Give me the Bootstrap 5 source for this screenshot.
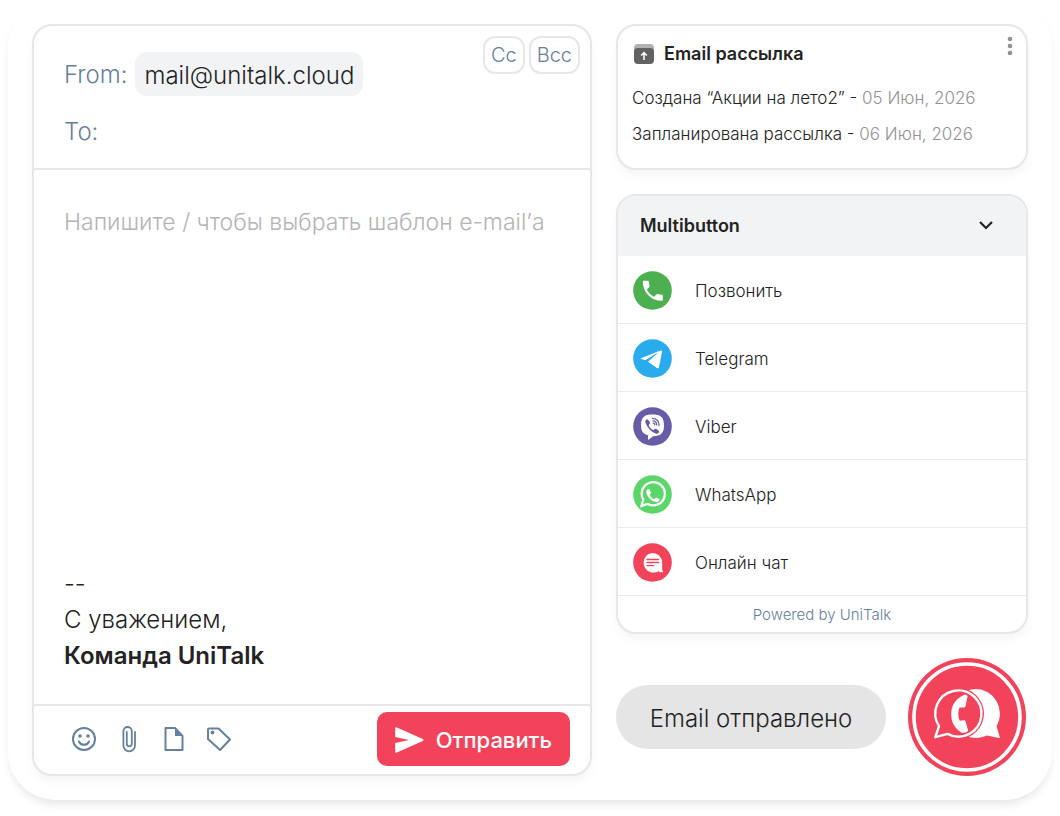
<!DOCTYPE html>
<html lang="ru">
<head>
<meta charset="utf-8">
<meta name="viewport" content="width=device-width, initial-scale=1">
<title>UniTalk Email</title>
<link href="https://cdn.jsdelivr.net/npm/bootstrap@5.3.0/dist/css/bootstrap.min.css" rel="stylesheet">
<style>
  :root { --line: #e6e6eb; --steel: #66819d; --ink: #232323; --brand: #f2435a; --soft: #f2f3f5; }
  body { font-family: Inter, "Liberation Sans", sans-serif; font-weight: 300; color: var(--ink); background: #fff; }
  .stage { border-radius: 48px; background: #fff; box-shadow: 0 6px 10px -2px rgba(0,0,0,.1); margin: 0 8px 16px; padding: 24px; }
  .layout { display: grid; grid-template-columns: 560fr 412fr; gap: 24px; }
  .panel { border: 2px solid var(--line); border-radius: 20px; background: #fff; box-shadow: 0 6px 12px -2px rgba(0,0,0,.05); overflow: hidden; }
  .t-lg { font-size: 24px; line-height: 36px; }
  .t-md { font-size: 17px; line-height: 36px; }
  .steel { color: var(--steel); }
  .composer-head { padding: 26px 30px 18px; border-bottom: 2px solid var(--line); }
  .composer-head .steel { padding-top: 2px; }
  .chip { background: var(--soft); border-radius: 12px; padding: 6px 9px 2px; }
  .copy-btns { top: 10px; right: 10px; gap: 4px; }
  .copy-btn { border: 2px solid var(--line); border-radius: 12px; background: #fff; color: var(--steel); font-size: 20px; line-height: 34px; font-weight: 300; padding: 0 6px; }
  .bare { border: 0; background: transparent; outline: 0; padding: 0; resize: none; color: inherit; font-weight: 300; }
  .composer-body { padding: 34px 30px 30px; }
  .composer-body textarea { font-size: 23px; line-height: 36px; }
  .composer-body textarea::placeholder { color: #b4b4b4; opacity: 1; }
  .composer-foot { padding: 6px 20px 8px 37px; border-top: 2px solid var(--line); }
  .tool { border: 0; background: none; padding: 0; color: var(--steel); width: 26px; height: 28px; line-height: 0; }
  .send { background: var(--brand); color: #fff; border: 0; border-radius: 10px; height: 54px; padding: 2px 18px 0; font-size: 22px; font-weight: 500; gap: 12px; }
  .news { padding: 10px 14px 16px; }
  .news-title { font-size: 18px; line-height: 36px; font-weight: 600; }
  .muted-date { color: #929292; }
  .kebab { top: 10px; right: 6px; border: 0; background: none; padding: 0; width: 20px; height: 20px; line-height: 0; }
  .multi-head { background: var(--soft); border: 0; height: 60px; padding: 0 32px 2px 22px; font-size: 18px; font-weight: 600; color: var(--ink); }
  .channel { height: 68px; padding: 2px 15px 0; gap: 23px; color: var(--ink); text-decoration: none; border-bottom: 1px solid #e9eaec; font-size: 17px; }
  .channel span { padding-top: 2px; }
  .powered { font-size: 15px; line-height: 34px; padding-top: 2px; text-decoration: none; color: var(--steel); }
  .toast-pill { background: #e5e5e5; border-radius: 32px; height: 64px; font-size: 24px; padding-top: 4px; }
  .fab { border: 0; background: none; padding: 0; width: 118px; height: 118px; line-height: 0; margin-right: 2px; }
</style>
</head>
<body>
<main class="stage">
  <div class="layout">
    <form class="panel d-flex flex-column position-relative" onsubmit="return false">
      <div class="composer-head t-lg">
        <div class="d-flex align-items-center gap-2">
          <span class="steel">From:</span>
          <output class="chip">mail@unitalk.cloud</output>
        </div>
        <div class="d-flex align-items-center mt-3 gap-2">
          <label class="steel" for="to">To:</label>
          <input class="bare flex-grow-1" id="to" type="email">
        </div>
        <div class="copy-btns d-flex position-absolute">
          <button type="button" class="copy-btn">Cc</button>
          <button type="button" class="copy-btn">Bcc</button>
        </div>
      </div>
      <div class="composer-body d-flex flex-column flex-grow-1">
        <textarea class="bare w-100 flex-grow-1" aria-label="Текст письма" placeholder="Напишите / чтобы выбрать шаблон e-mail’а"></textarea>
        <div class="t-lg">--<br>С уважением,<br><strong class="fw-semibold">Команда UniTalk</strong></div>
      </div>
      <div class="composer-foot d-flex align-items-center justify-content-between">
        <div class="d-flex align-items-center" style="gap:19px">
          <button type="button" class="tool" aria-label="Смайлы"><svg width="26" height="28" viewBox="0 0 26 28" fill="none" stroke="currentColor" stroke-width="2"><circle cx="13" cy="14" r="11"/><path d="M8 16.5a5.4 5.4 0 0 0 10 0" stroke-linecap="round"/><circle cx="9" cy="11" r="1.8" fill="currentColor" stroke="none"/><circle cx="17" cy="11" r="1.8" fill="currentColor" stroke="none"/></svg></button>
          <button type="button" class="tool" aria-label="Вложение"><svg width="26" height="28" viewBox="0 0 26 28" fill="none" stroke="currentColor" stroke-width="1.8" stroke-linecap="round"><path d="M19 7v13.5a5.8 5.8 0 0 1-11.6 0V6.200a4.200 4.200 0 0 1 8.400 0v12.600a2.500 2.500 0 0 1-5 0V7"/></svg></button>
          <button type="button" class="tool" aria-label="Файл"><svg width="26" height="28" viewBox="0 0 26 28"><path d="M4.500 3H14l7.500 8v14h-17z" fill="none" stroke="currentColor" stroke-width="2" stroke-linejoin="round"/><path d="M14 2.500V11h8z" fill="currentColor"/></svg></button>
          <button type="button" class="tool" aria-label="Метка"><svg width="26" height="28" viewBox="0 0 26 28"><path d="M3 3.500h9.500L24 14.500 14 25 2 14V4.500a1 1 0 0 1 1-1z" fill="none" stroke="currentColor" stroke-width="2" stroke-linejoin="round"/><circle cx="6.500" cy="7.500" r="1.900" fill="currentColor"/></svg></button>
        </div>
        <button type="submit" class="send d-flex align-items-center"><svg width="29" height="26" viewBox="0 0 29 26" fill="#fff"><path d="M1.300.3 27.800 12c1 .5 1 1.500 0 2L1.300 25.700C.6 26 .2 25.600.2 25v-9L14 13 .2 10V1C.2.400.6 0 1.300.3z"/></svg>Отправить</button>
      </div>
    </form>

    <div class="d-flex flex-column gap-4">
      <section class="panel news position-relative">
        <div class="news-title d-flex align-items-center gap-2 mb-2"><svg width="24" height="20" viewBox="-2 0 24 20"><rect width="20" height="16" rx="4" fill="#b2b2b2"/><rect y="4" width="20" height="16" rx="4" fill="#626262"/><path d="M10 16V9M7.200 11.500 10 8.700l2.800 2.800" fill="none" stroke="#fff" stroke-width="1.600"/></svg><span>Email рассылка</span></div>
        <div class="t-md">Создана “Акции на лето2” - <span class="muted-date">05 Июн, 2026</span></div>
        <div class="t-md">Запланирована рассылка - <span class="muted-date">06 Июн, 2026</span></div>
        <button type="button" class="kebab position-absolute" aria-label="Меню"><svg width="20" height="20" viewBox="0 0 20 20" fill="#929292"><circle cx="10" cy="3" r="2.300"/><circle cx="10" cy="10" r="2.300"/><circle cx="10" cy="17" r="2.300"/></svg></button>
      </section>

      <section class="panel">
        <button type="button" class="multi-head w-100 d-flex align-items-center justify-content-between">Multibutton<svg width="16" height="10" viewBox="0 0 16 10" fill="none" stroke="#232323" stroke-width="2.200"><path d="m2 2 6 6 6-6"/></svg></button>
        <nav>
          <a href="#" class="channel d-flex align-items-center"><svg width="39" height="39" viewBox="0 0 39 39"><circle cx="19.500" cy="19.500" r="19.300" fill="#4caf50"/><path transform="translate(6.500 6.500) scale(1.110)" fill="#fff" d="M6.620 10.790c1.440 2.830 3.760 5.140 6.590 6.590l2.200-2.200c.27-.27.670-.36 1.020-.24 1.120.37 2.330.57 3.570.57.55 0 1 .45 1 1V20c0 .55-.45 1-1 1C10.610 21 3 13.390 3 4c0-.55.45-1 1-1h3.500c.55 0 1 .45 1 1 0 1.250.2 2.450.57 3.570.11.35.03.74-.25 1.020z"/></svg><span>Позвонить</span></a>
          <a href="#" class="channel d-flex align-items-center"><svg width="39" height="39" viewBox="0 0 39 39"><circle cx="19.500" cy="19.500" r="19.300" fill="#2aabee"/><path fill="#fff" d="M8.500 19 27.500 11.600c1-.4 1.700.2 1.500 1.300l-3 15.100c-.2 1.300-1.100 1.600-2.100.9L15 22.700l9.200-8.300c.4-.4 0-.6-.6-.2l-11.300 7.100-4-1.200c-.7-.2-.6-.8.2-1.100z"/></svg><span>Telegram</span></a>
          <a href="#" class="channel d-flex align-items-center"><svg width="39" height="39" viewBox="0 0 39 39"><circle cx="19.500" cy="19.500" r="19.300" fill="#665ca7"/><path fill="#fff" d="M19.500 7.500c7.500 0 11.500 2 11.500 11 0 8-3.500 10.600-10.700 10.700L15 33v-4.700C10.500 27 8 24.500 8 18.500c0-9 4-11 11.500-11z"/><path fill="#665ca7" d="M13.200 12.800c.9-.8 1.700-.5 2.300.4l1.300 2c.5.8.2 1.500-.5 2-.6.500-.6 1-.2 1.900.7 1.800 1.800 3 3.500 3.700.8.400 1.300.1 1.800-.5.600-.7 1.200-.8 2-.3l2 1.400c.8.600.9 1.200.3 2.100-.9 1.300-1.900 1.700-3.300 1.100-5-2.300-8.200-5.800-10-11-.3-1.100 0-2 .8-2.800z"/><path fill="none" stroke="#665ca7" stroke-width="1.300" stroke-linecap="round" d="M19.500 11.300c4.200.2 6.600 3 6.500 7.300M20 13.900c2.400.2 3.600 1.700 3.600 4M20.300 16.200c.9.100 1.300.5 1.400 1.500"/></svg><span>Viber</span></a>
          <a href="#" class="channel d-flex align-items-center"><svg width="39" height="39" viewBox="0 0 39 39"><circle cx="19.500" cy="19.500" r="19.300" fill="#5bd769"/><path fill="none" stroke="#fff" stroke-width="2.300" d="m8.600 30.800 1.700-6.100A11.600 11.600 0 1 1 14.800 29z"/><path transform="translate(12 12.200) scale(.7)" fill="#fff" d="M6.620 10.790c1.440 2.830 3.760 5.140 6.590 6.590l2.200-2.200c.27-.27.670-.36 1.020-.24l3.600 1.600c1.200.5.900 1.500.4 2.600-.6 1.400-2.700 2.400-4.400 2.100C9 20.200 3.500 14.500 2 8c-.4-2 .5-3.900 2-5 .8-.5 2.300-.5 2.700.4l1.700 4c.3.600 0 1.200-.3 1.600z"/></svg><span>WhatsApp</span></a>
          <a href="#" class="channel d-flex align-items-center"><svg width="39" height="39" viewBox="0 0 39 39"><circle cx="19.500" cy="19.500" r="19.300" fill="#f2435a"/><path fill="#fff" d="M19.500 10a9.700 9.700 0 0 1 9.700 9.700v7.100l1 2.500c-2 .2-3.500 0-4.800-1.100A9.800 9.800 0 1 1 19.500 10z"/><path stroke="#f2435a" stroke-width="1.300" stroke-linecap="round" d="M14 16.500h11.500M14 19.500h11.500M14 22.700h6.500"/></svg><span>Онлайн чат</span></a>
        </nav>
        <a href="#" class="powered d-block text-center">Powered by UniTalk</a>
      </section>

      <div class="d-flex align-items-center" style="gap:22px">
        <div class="toast-pill flex-grow-1 d-flex align-items-center justify-content-center" role="status">Email отправлено</div>
        <button type="button" class="fab" aria-label="Открыть чат"><svg width="118" height="118" viewBox="0 0 118 118"><circle cx="59" cy="59" r="59" fill="#f2435a"/><circle cx="59" cy="59" r="53" fill="none" stroke="#fff" stroke-width="3.600"/><path fill="#fff" d="M67.500 31A24.500 24.500 0 0 1 88.500 68l3.300 11.200c0 .7-.3 1-1 .9L79 77.500A24.500 24.500 0 1 1 67.500 31z"/><circle cx="50.400" cy="55.500" r="25.600" fill="#f2435a"/><path fill="#f2435a" stroke="#fff" stroke-width="2.400" stroke-linejoin="round" d="M39.500 75.900 27.300 79.200 31 68.100A23.100 23.100 0 1 1 39.500 75.900z"/><path fill="#fff" d="M57 36.500c1.500.2 2.700 1 2.500 2.200l-2 9.500c-.2.900-.8 1.200-1.700 1.200h-4.300c-1.700 4.500-1.700 9 .2 13.300l4.200-.5c.9-.1 1.400.3 1.600 1.100l2.500 8.700c.3 1.100-.5 1.800-1.500 2.200l-4 .8C46 70.500 43 63.500 43.200 55.500c0-8 5-15.800 13.800-19z"/></svg></button>
      </div>
    </div>
  </div>
</main>
<script src="https://cdn.jsdelivr.net/npm/bootstrap@5.3.0/dist/js/bootstrap.bundle.min.js"></script>
</body>
</html>
